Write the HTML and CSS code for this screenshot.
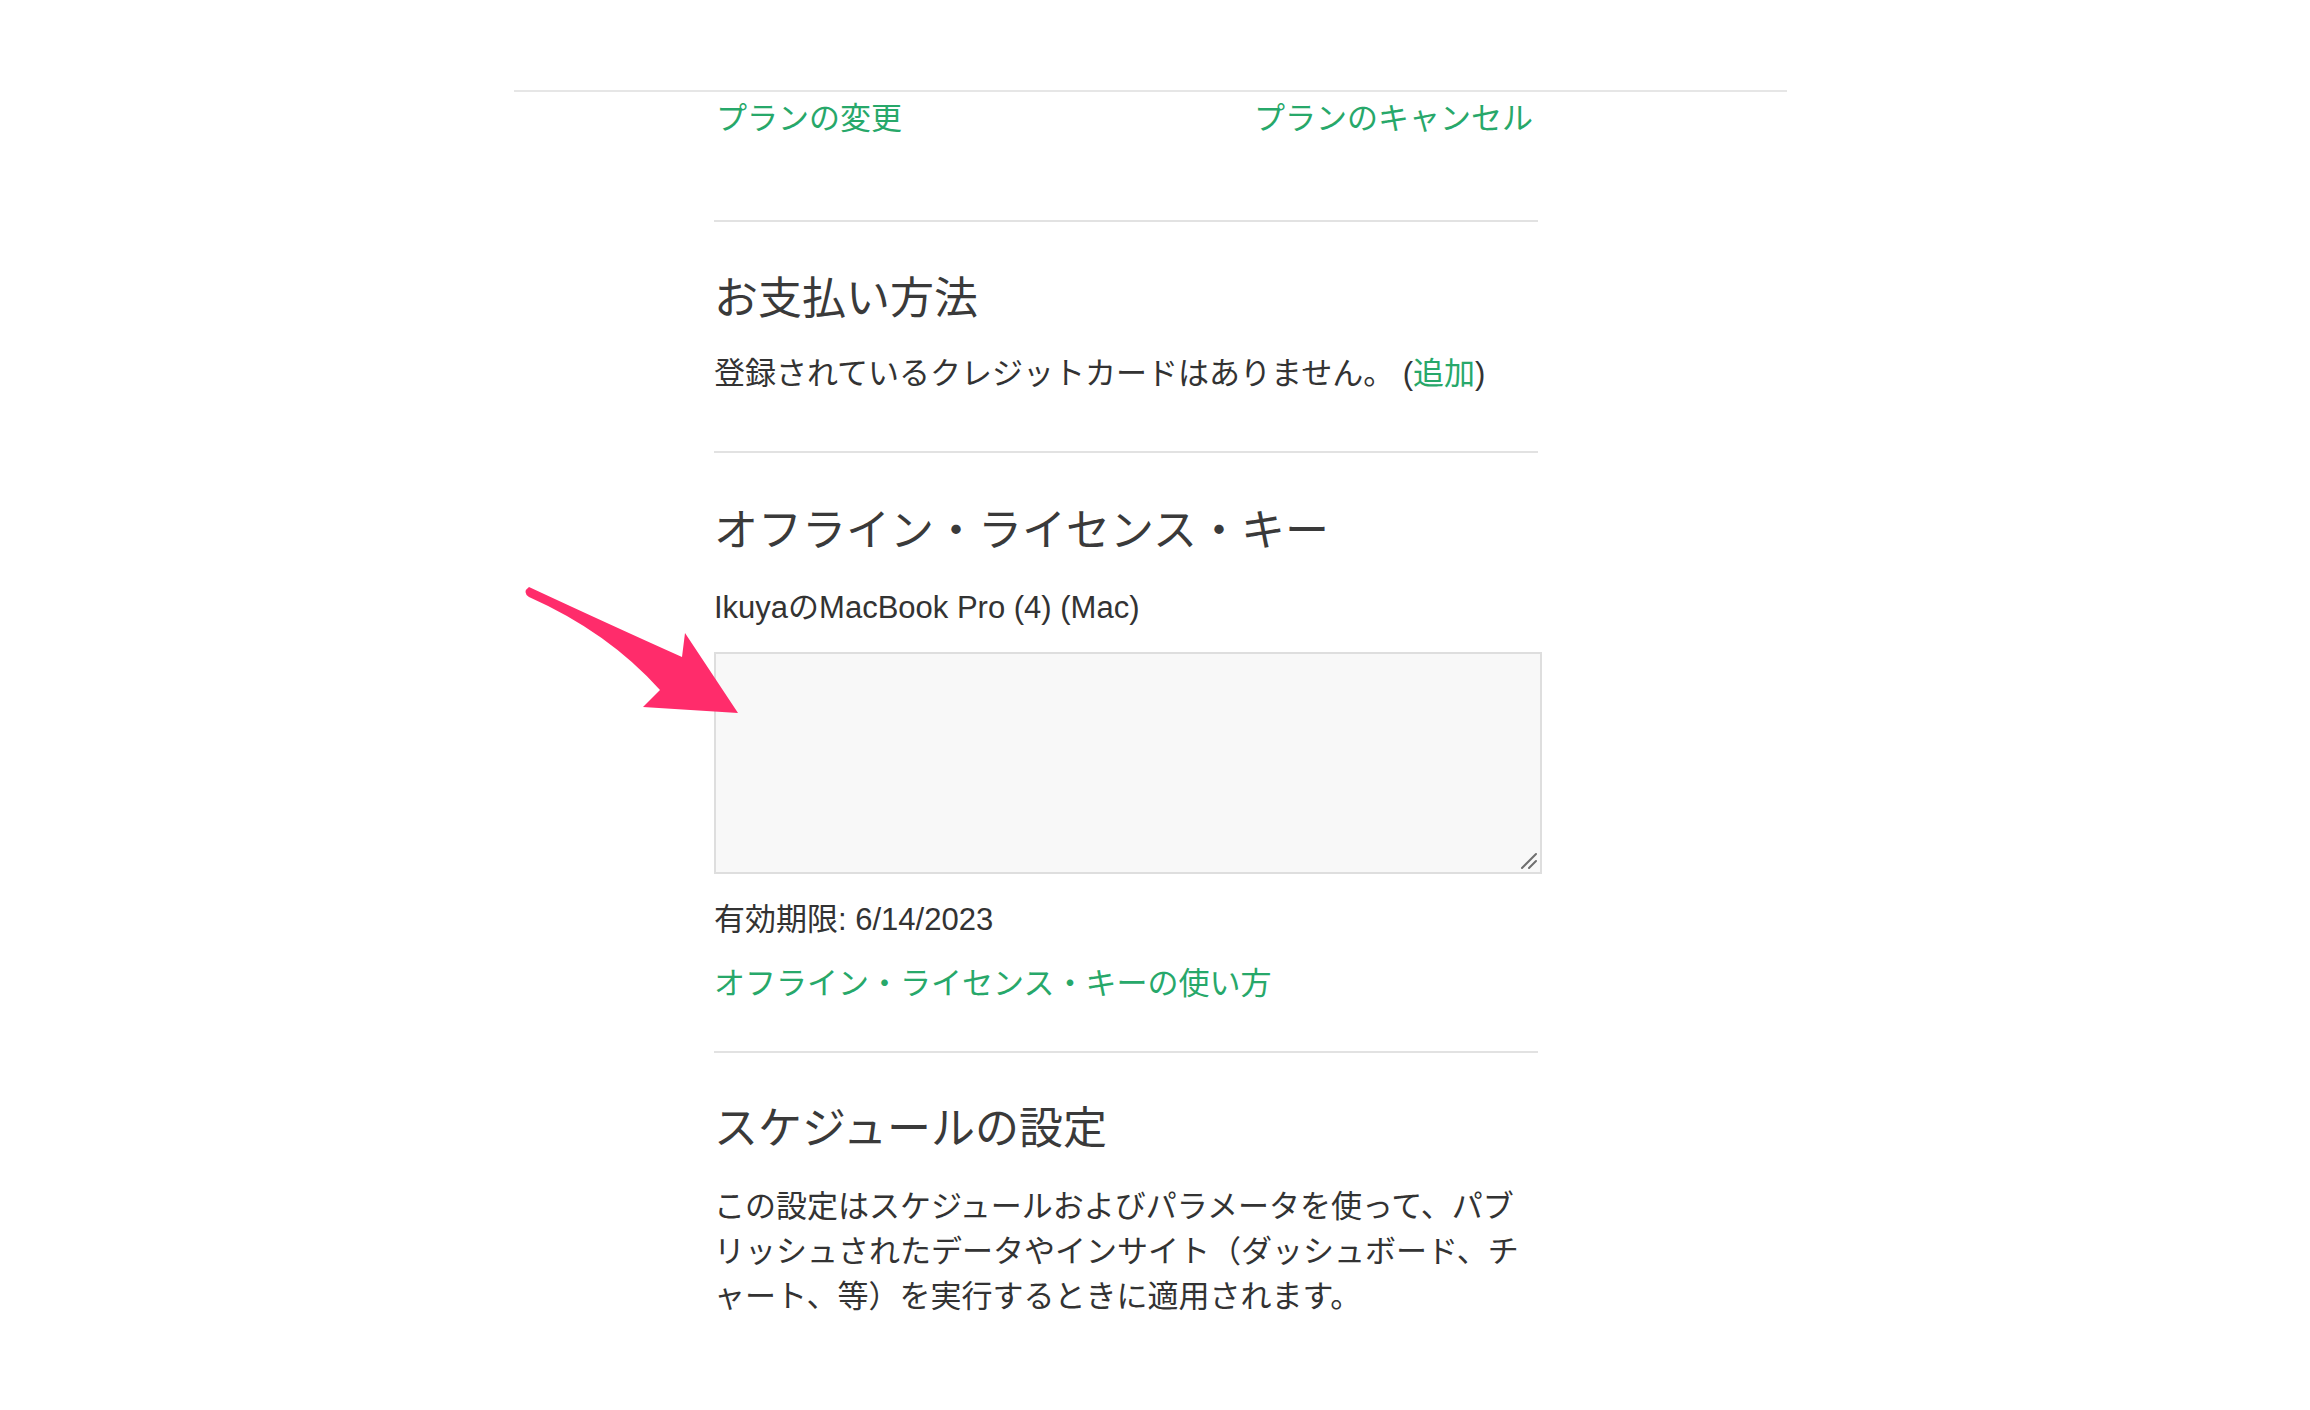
FILE: index.html
```html
<!DOCTYPE html>
<html lang="ja">
<head>
<meta charset="utf-8">
<title>設定</title>
<link rel="stylesheet" href="styles.css">
</head>
<body>
<div class="frame">
  <div class="col">
    <div class="plan-links">
      <a class="link" href="#">プランの変更</a>
      <a class="link" href="#">プランのキャンセル</a>
    </div>

    <section class="block block-pay">
      <h2 class="heading">お支払い方法</h2>
      <p class="text">登録されているクレジットカードはありません。 (<a class="link" href="#">追加</a>)</p>
    </section>

    <section class="block block-key">
      <h2 class="heading">オフライン・ライセンス・キー</h2>
      <p class="text device">IkuyaのMacBook Pro (4) (Mac)</p>
      <div class="key-wrap">
        <textarea class="key-box"></textarea>
        <svg class="grip" width="20" height="20" viewBox="0 0 20 20" aria-hidden="true">
          <path d="M 3,17 L 17,3 M 10,17 L 17,10" stroke="#6f6f6f" stroke-width="2" stroke-linecap="round" fill="none"/>
        </svg>
      </div>
      <p class="text expiry">有効期限: 6/14/2023</p>
      <p class="text howto"><a class="link" href="#">オフライン・ライセンス・キーの使い方</a></p>
    </section>

    <section class="block block-schedule">
      <h2 class="heading">スケジュールの設定</h2>
      <p class="text desc">この設定はスケジュールおよびパラメータを使って、パブリッシュされたデータやインサイト（ダッシュボード、チャート、等）を実行するときに適用されます。</p>
    </section>
  </div>
</div>

<svg class="arrow" width="240" height="150" viewBox="0 0 240 150" aria-hidden="true">
  <path d="M 9,7 Q 95,47 162,77 L 165,53 L 218,133 L 123,127 L 140,110 Q 88,52 9,17 Q 2,12 9,7 Z" fill="#ff2c6b"/>
</svg>
</body>
</html>
```

FILE: styles.css
```css
html, body {
  margin: 0;
  padding: 0;
  background: #ffffff;
}

body {
  font-family: "Liberation Sans", "Noto Sans CJK JP", sans-serif;
  color: #333333;
  position: relative;
  min-height: 1410px;
}

.frame {
  margin-top: 90px;
  margin-left: 514px;
  width: 1273px;
  border-top: 2px solid #e6e6e6;
}

.col {
  margin-left: 200px;
  width: 824px;
}

.link {
  color: #27a86a;
  text-decoration: none;
}

.plan-links {
  display: flex;
  justify-content: space-between;
  padding: 5px 5px 0 2px;
  height: 44px;
  margin-bottom: 79px;
  font-size: 31px;
  line-height: 44px;
}

.block {
  border-top: 2px solid #e2e2e2;
}

.heading {
  margin: 0;
  font-size: 44px;
  line-height: 52px;
  font-weight: 400;
  color: #3a3a3a;
}

.text {
  margin: 0;
  font-size: 31px;
  line-height: 44px;
}

.block-pay {
  padding-top: 51px;
  padding-bottom: 55px;
}

.block-pay .text {
  margin-top: 27px;
}

.block-key {
  padding-top: 52px;
  padding-bottom: 45px;
}

.device {
  margin-top: 29px;
}

.key-wrap {
  position: relative;
  margin-top: 22px;
  width: 828px;
  height: 222px;
}

.key-box {
  display: block;
  box-sizing: border-box;
  margin: 0;
  width: 828px;
  height: 222px;
  border: 2px solid #dedede;
  background: #f8f8f8;
  border-radius: 0;
  padding: 8px;
  font-family: "Liberation Mono", monospace;
  font-size: 20px;
  outline: none;
  resize: none;
}

.grip {
  position: absolute;
  right: 3px;
  bottom: 3px;
}

.expiry {
  margin-top: 24px;
}

.howto {
  margin-top: 20px;
}

.block-schedule {
  padding-top: 50px;
  padding-bottom: 80px;
}

.desc {
  margin-top: 29px;
  line-height: 45px;
}

.arrow {
  position: absolute;
  left: 520px;
  top: 580px;
}
```
